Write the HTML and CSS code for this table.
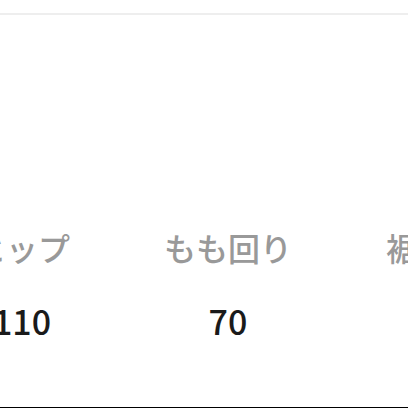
FILE: index.html
```html
<!DOCTYPE html>
<html lang="ja">
<head>
<meta charset="utf-8">
<link rel="stylesheet" href="styles.css">
</head>
<body>
<div class="page">
  <div class="topbar"></div>
  <div class="table">
    <div class="col">
      <div class="label">ヒップ</div>
      <div class="value">110</div>
    </div>
    <div class="col">
      <div class="label">もも回り</div>
      <div class="value">70</div>
    </div>
    <div class="col">
      <div class="label">裾周り</div>
      <div class="value"></div>
    </div>
  </div>
  <div class="spacer"></div>
  <div class="bottom"></div>
</div>
</body>
</html>
```

FILE: styles.css
```css
html, body {
  margin: 0;
  padding: 0;
  background: #fff;
}
.page {
  width: 408px;
  height: 408px;
  overflow: hidden;
  display: flex;
  flex-direction: column;
  font-family: "Noto Sans CJK JP", "Noto Sans", sans-serif;
}
.topbar {
  height: 13px;
  border-bottom: 2px solid #eeeeee;
  flex: none;
}
.table {
  display: flex;
  margin-left: -81px;
  padding-top: 208px;
  flex: none;
}
.col {
  flex: none;
  width: 206px;
  display: flex;
  flex-direction: column;
  align-items: center;
}
.label {
  font-size: 32px;
  font-weight: 500;
  color: #999999;
  line-height: 48px;
  white-space: nowrap;
}
.value {
  font-size: 34px;
  font-weight: 500;
  color: #1a1a1a;
  line-height: 40px;
  margin-top: 30px;
  height: 40px;
}
.spacer {
  flex: 1;
}
.bottom {
  height: 1px;
  background: #000;
  flex: none;
}
```
